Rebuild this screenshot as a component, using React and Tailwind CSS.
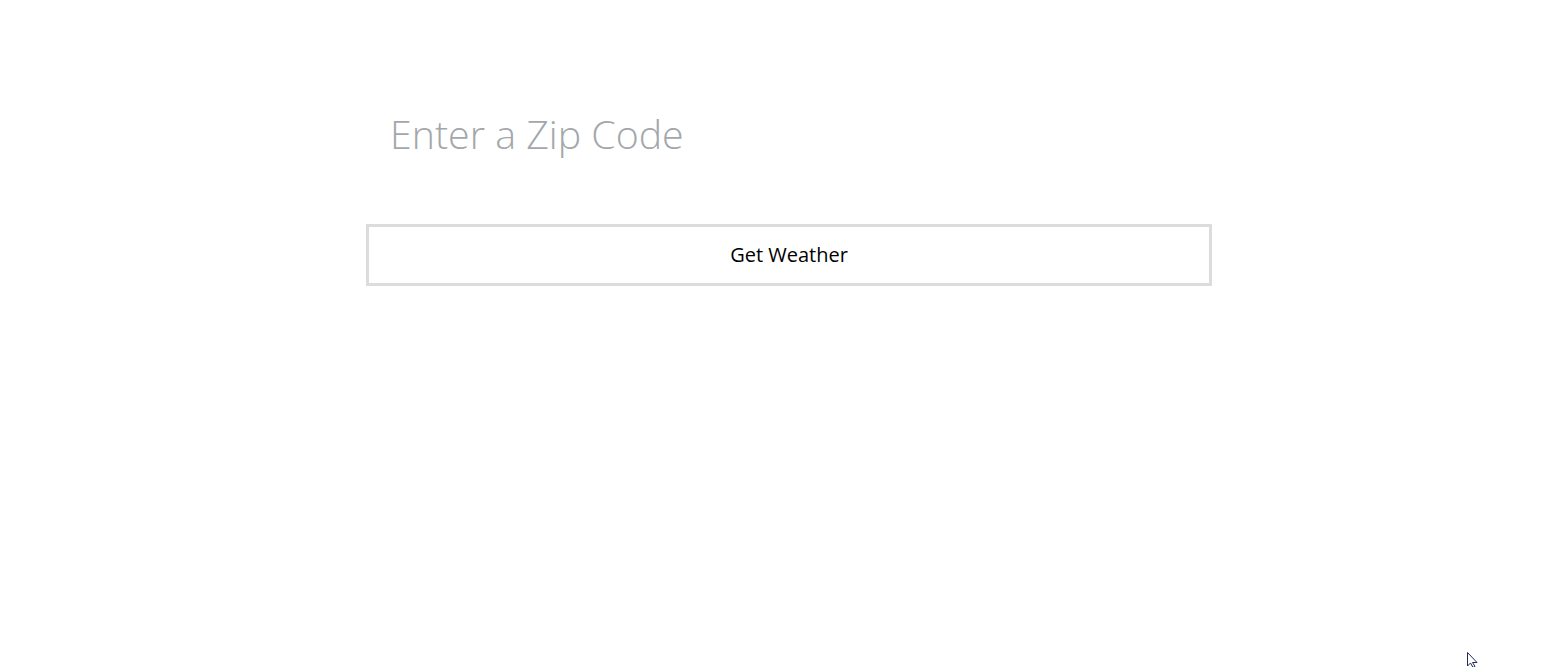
import React, { useState } from "react";

const App = () => {
  const [zip, setZip] = useState("");

  return (
    <div className="relative min-h-[667px] w-full bg-white">
      <div className="ml-[366px] w-[846px] pt-[100px]">
        {/* zip input, borderless */}
        <input
          type="text"
          value={zip}
          onChange={(e) => setZip(e.target.value)}
          placeholder="Enter a Zip Code"
          className="block h-[68px] w-full bg-transparent px-[24px] text-[39.3px] font-light text-gray-700 outline-none placeholder:text-[#a3a7ab]"
          style={{ fontFamily: '"Open Sans", sans-serif' }}
        />
        <button
          type="button"
          className="mt-[56px] flex h-[62px] w-full items-center justify-center border-[3px] border-[#dcdcdc] bg-white text-[20px] text-black"
          style={{ fontFamily: '"Open Sans", sans-serif' }}
        >
          Get Weather
        </button>
      </div>

      {/* mouse pointer left in the capture */}
      <svg
        className="absolute left-[1467px] top-[652px]"
        width="12"
        height="16"
        viewBox="0 0 12 16"
      >
        <path
          d="M0.5 0.5 L0.5 14 L3.5 11 L6 15.5 L8 14.5 L5.5 10.5 L10 10.5 Z"
          fill="white"
          stroke="#1e2a5a"
          strokeWidth="1"
        />
      </svg>
    </div>
  );
};

export default App;
